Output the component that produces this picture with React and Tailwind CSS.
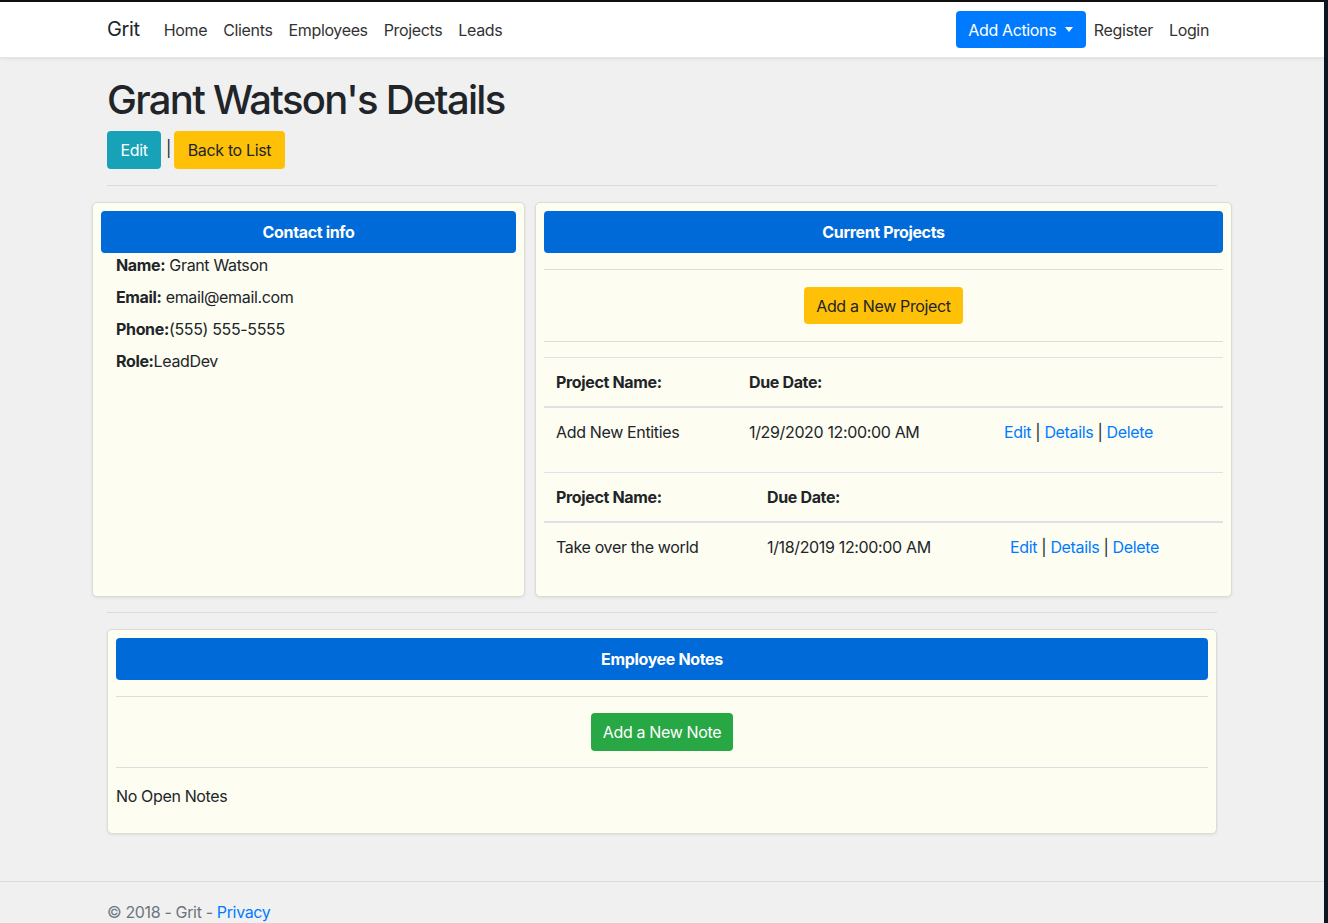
import React from "react";

const font = { fontFamily: "Inter, 'Noto Sans', sans-serif" };

function Hr({ className = "" }) {
  return <div className={"h-px bg-[#dcdcdc] " + className} />;
}

function ProjectTable({ rows, widths }) {
  return (
    <table className="w-full mb-4 border-collapse text-[16px] text-[#212529]">
      <thead>
        <tr>
          <th className={"text-left font-bold px-3 py-3 leading-6 border-t border-b-2 border-t-[#dee2e6] border-b-[#dee2e6] " + widths[0]}>
            Project Name:
          </th>
          <th className={"text-left font-bold px-3 py-3 leading-6 border-t border-b-2 border-t-[#dee2e6] border-b-[#dee2e6] " + widths[1]}>
            Due Date:
          </th>
          <th className="px-3 py-3 border-t border-b-2 border-t-[#dee2e6] border-b-[#dee2e6]" />
        </tr>
      </thead>
      <tbody>
        {rows.map((r) => (
          <tr key={r.name}>
            <td className="px-3 py-3 leading-6">{r.name}</td>
            <td className="px-3 py-3 leading-6">{r.due}</td>
            <td className="px-3 py-3 leading-6">
              <a className="text-[#007bff]">Edit</a> |{" "}
              <a className="text-[#007bff]">Details</a> |{" "}
              <a className="text-[#007bff]">Delete</a>
            </td>
          </tr>
        ))}
      </tbody>
    </table>
  );
}

export default function App() {
  return (
    <div className="flex min-h-screen bg-[#f0f0f0] tracking-[-0.35px]" style={font}>
      <div className="w-[1324px] flex flex-col text-[#212529]">
        <div className="h-[2px] bg-[#111]" />
        <nav className="h-[56px] bg-white shadow-[0_1px_3px_rgba(0,0,0,0.08)] border-b border-[#e5e5e5]">
          <div className="w-[1110px] mx-auto h-full flex items-center">
            <span className="text-[20px] text-[#212529] mr-[16px] pb-px">Grit</span>
            <div className="flex text-[16px] text-[#333]">
              {["Home", "Clients", "Employees", "Projects", "Leads"].map((l) => (
                <a key={l} className="px-2">{l}</a>
              ))}
            </div>
            <div className="ml-auto flex items-center text-[16px]">
              <button className="h-[37px] w-[130px] bg-[#007bff] text-white rounded-[4px] flex items-center justify-center gap-[9px]">
                Add Actions
                <span className="w-0 h-0 border-x-[4px] border-t-[5px] border-x-transparent border-t-white" />
              </button>
              <a className="px-2 text-[#333]">Register</a>
              <a className="px-2 text-[#333]">Login</a>
            </div>
          </div>
        </nav>

        <main className="w-[1110px] mx-auto pt-[18px]">
          <h1 className="text-[40px] font-medium leading-[48px] mb-[7px] tracking-[-1.7px]">Grant Watson's Details</h1>
          <div className="flex items-center">
            <button className="h-[38px] w-[54px] bg-[#17a2b8] text-white rounded-[4px] text-[16px]">Edit</button>
            <span className="ml-[5px] mr-[3px] text-[16px] pb-1">|</span>
            <button className="h-[38px] w-[111px] bg-[#ffc107] text-[#212529] rounded-[4px] text-[16px]">Back to List</button>
          </div>
          <Hr className="mt-4 mb-4" />

          <div className="flex gap-[10px] -mx-[15px]">
            <div className="w-[433px] h-[395px] bg-[#fdfdf1] border border-[#dcdcd4] rounded-[5px] shadow-[0_1px_3px_rgba(0,0,0,0.08)] p-2">
              <div className="h-[42px] bg-[#006ad8] rounded-[4px] text-white font-bold text-[16px] flex items-center justify-center">
                Contact info
              </div>
              <div className="pl-[15px] text-[16px] leading-6">
                <p className="mb-2"><b>Name:</b> Grant Watson</p>
                <p className="mb-2"><b>Email:</b> email@email.com</p>
                <p className="mb-2"><b>Phone:</b>(555) 555-5555</p>
                <p className="mb-2"><b>Role:</b>LeadDev</p>
              </div>
            </div>

            <div className="w-[697px] h-[395px] bg-[#fdfdf1] border border-[#dcdcd4] rounded-[5px] shadow-[0_1px_3px_rgba(0,0,0,0.08)] p-2">
              <div className="h-[42px] bg-[#006ad8] rounded-[4px] text-white font-bold text-[16px] flex items-center justify-center">
                Current Projects
              </div>
              <Hr className="mt-4" />
              <div className="flex justify-center py-[17px]">
                <button className="h-[37px] px-3 bg-[#ffc107] text-[#212529] rounded-[4px] text-[16px]">Add a New Project</button>
              </div>
              <Hr className="mb-[15px]" />
              <ProjectTable
                widths={["w-[193px]", "w-[255px]"]}
                rows={[{ name: "Add New Entities", due: "1/29/2020 12:00:00 AM" }]}
              />
              <ProjectTable
                widths={["w-[211px]", "w-[243px]"]}
                rows={[{ name: "Take over the world", due: "1/18/2019 12:00:00 AM" }]}
              />
            </div>
          </div>

          <Hr className="mt-[15px] mb-4" />

          <div className="h-[205px] bg-[#fdfdf1] border border-[#dcdcd4] rounded-[5px] shadow-[0_1px_3px_rgba(0,0,0,0.08)] p-2">
            <div className="h-[42px] bg-[#006ad8] rounded-[4px] text-white font-bold text-[16px] flex items-center justify-center">
              Employee Notes
            </div>
            <Hr className="mt-4" />
            <div className="flex justify-center py-[16px]">
              <button className="h-[38px] px-3 bg-[#28a745] text-white rounded-[4px] text-[16px]">Add a New Note</button>
            </div>
            <Hr />
            <p className="mt-4 mb-4 text-[16px] leading-6">No Open Notes</p>
          </div>
        </main>

        <footer className="mt-[47px] border-t border-[#dcdcdc] h-[60px] leading-[60px] text-[16px] text-[#6c757d]">
          <div className="w-[1110px] mx-auto">
            © 2018 - Grit - <a className="text-[#007bff]">Privacy</a>
          </div>
        </footer>
      </div>
      <div className="w-[4px] bg-[#0b1622]" />
    </div>
  );
}
